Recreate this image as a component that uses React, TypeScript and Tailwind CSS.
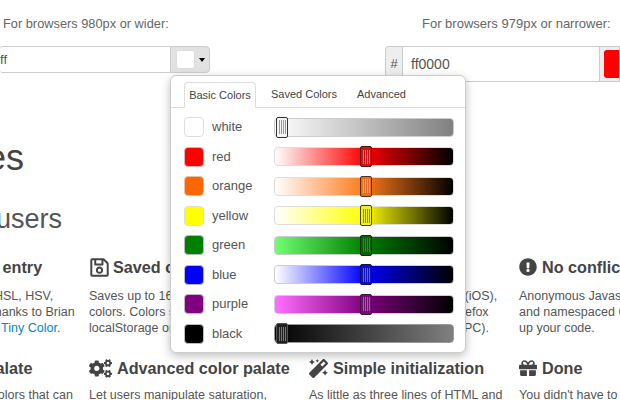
import { FaRegSave, FaCogs, FaMagic, FaExclamationCircle, FaGift } from "react-icons/fa";
import type { ReactNode } from "react";

const colors = [
  { name: "white", swatch: "bg-white border-[#ddd]", track: "bg-[linear-gradient(to_right,#ffffff,#808080)] border-[#ccc]", thumb: "ml-[1px] bg-[#f4f4f4] border-[#333]", line: "bg-[#999]" },
  { name: "red", swatch: "bg-[#ff0000] border-[#e4b0b0]", track: "bg-[linear-gradient(to_right,#ffffff,#ff0000_50%,#000000)] border-[#ddd]", thumb: "ml-[85px] bg-[#cc1515] border-[#501010]", line: "bg-[#f07070]" },
  { name: "orange", swatch: "bg-[#ff6600] border-[#e8c0a0]", track: "bg-[linear-gradient(to_right,#ffffff,#ff7a1a_50%,#000000)] border-[#ddd]", thumb: "ml-[85px] bg-[#e87020] border-[#503015]", line: "bg-[#f5a870]" },
  { name: "yellow", swatch: "bg-[#ffff00] border-[#ddd]", track: "bg-[linear-gradient(to_right,#ffffff,#ffff00_50%,#000000)] border-[#ddd]", thumb: "ml-[85px] bg-[#eeee20] border-[#404010]", line: "bg-[#888820]" },
  { name: "green", swatch: "bg-[#008000] border-[#bbb]", track: "bg-[linear-gradient(to_right,#70ff70,#008000_50%,#000000)] border-[#ccc]", thumb: "ml-[85px] bg-[#0a600a] border-[#0a300a]", line: "bg-[#308830]" },
  { name: "blue", swatch: "bg-[#0000ff] border-[#bbb]", track: "bg-[linear-gradient(to_right,#ffffff,#0000ff_50%,#000000)] border-[#ccc]", thumb: "ml-[85px] bg-[#1010c0] border-[#101060]", line: "bg-[#6060e0]" },
  { name: "purple", swatch: "bg-[#800080] border-[#bbb]", track: "bg-[linear-gradient(to_right,#ff70ff,#800080_50%,#000000)] border-[#ccc]", thumb: "ml-[85px] bg-[#701070] border-[#401040]", line: "bg-[#a060a0]" },
  { name: "black", swatch: "bg-black border-[#bbb]", track: "bg-[linear-gradient(to_right,#000000,#808080)] border-[#999]", thumb: "ml-[1px] bg-[#202020] border-[#555]", line: "bg-[#777]" },
];

function Feature({ icon, title, titleClass = "", bodyClass = "mt-[9px]", lines }: { icon?: ReactNode; title: string; titleClass?: string; bodyClass?: string; lines: ReactNode[] }) {
  return (
    <div className="whitespace-nowrap">
      <h4 className={`flex items-center gap-[5px] h-[24px] text-[16.2px] font-bold text-[#444] ${titleClass}`}>
        {icon}
        <span>{title}</span>
      </h4>
      <div className={`text-[12.5px] leading-[16px] text-[#555] ${bodyClass}`}>
        {lines.map((l, i) => (
          <div key={i}>{l}</div>
        ))}
      </div>
    </div>
  );
}

function Thumb({ cls, line }: { cls: string; line: string }) {
  return (
    <div className={`flex h-[21px] w-[12px] -mt-[2px] items-center justify-center gap-[1px] rounded-[2px] border ${cls}`}>
      <span className={`h-[14px] w-[1px] ${line}`} />
      <span className={`h-[14px] w-[1px] ${line}`} />
      <span className={`h-[14px] w-[1px] ${line}`} />
      <span className={`h-[14px] w-[1px] ${line}`} />
    </div>
  );
}

export default function App() {
  return (
    <div className="relative h-[400px] w-[620px] overflow-hidden bg-white font-['Liberation_Sans',Arial,sans-serif] text-[#555]">
      <div className="flex items-start pt-[14px]">
        <div className="w-[385px]">
          <div className="pl-[3px] text-[12.8px] leading-[20px] text-[#666]">For browsers 980px or wider:</div>
          <div className="mt-[12px] flex h-[27px] w-[210px]">
            <div className="flex-1 overflow-hidden rounded-l-[3px] border-y border-[#ccc] text-[13px] leading-[25px] text-[#555]">ff</div>
            <div className="flex w-[40px] items-center gap-[4px] rounded-r-[4px] border border-[#ccc] bg-[#e2e2e2] pl-[5px]">
              <div className="h-[19px] w-[19px] rounded-[3px] border border-[#ddd] bg-white" />
              <div className="h-0 w-0 border-x-[3px] border-t-[4px] border-x-transparent border-t-black" />
            </div>
          </div>
        </div>
        <div className="w-[235px]">
          <div className="pl-[37px] text-[13px] leading-[20px] text-[#666]">For browsers 979px or narrower:</div>
          <div className="mt-[12px] flex h-[36px]">
            <div className="flex w-[18px] items-center justify-center rounded-l-[3px] border border-[#ccc] bg-[#eee] text-[13px]">#</div>
            <div className="w-[196px] border-y border-[#ccc] pl-[8px] text-[14px] leading-[34px]">ff0000</div>
            <div className="flex-1 border border-[#ccc] bg-[#eee] py-[3px] pl-[4px]">
              <div className="h-full w-full rounded-l-[3px] bg-[#ff0000]" />
            </div>
          </div>
        </div>
      </div>

      <h2 className="mt-[51px] -ml-[118px] whitespace-nowrap text-[36px] leading-[50px] text-[#444]">Features</h2>
      <h3 className="mt-[12px] -ml-[52px] whitespace-nowrap text-[27px] leading-[48px] text-[#555]">For users</h3>

      <div className="mt-[12px] -ml-[131px] grid w-[880px] grid-cols-[220px_220px_210px_210px] gap-y-[20px]">
        <Feature
          titleClass="pl-[97px]"
          title="Text entry"
          lines={[
            <div className="pl-[59px]">Uses RGB, HSL, HSV,</div>,
            <div className="pl-[66px]">and more thanks to Brian</div>,
            <div className="pl-[66px]">Grinstead's <a className="text-[#0088cc]">Tiny Color</a>.</div>,
          ]}
        />
        <Feature icon={<FaRegSave className="-mr-[2px] text-[21px]" />} title="Saved colors" lines={["Saves up to 16 of your", "colors. Colors saved in", "localStorage or cookies."]} />
        <Feature title="Works everywhere" lines={["Chrome, Safari, Opera Mini (iOS),", "Internet Explorer 7+, and Firefox", "Opera and Safari (Mac/Win/PC)."]} />
        <Feature icon={<FaExclamationCircle className="text-[18px]" />} title="No conflicts" lines={["Anonymous Javascript", "and namespaced CSS keep", "up your code."]} />
        <Feature
          titleClass="pl-[69px]"
          title="Basic palate"
          bodyClass="mt-[7px]"
          lines={[<div className="pl-[83px]">Preset colors that can</div>]}
        />
        <Feature icon={<FaCogs className="text-[23px]" />} title="Advanced color palate" bodyClass="mt-[7px]" lines={["Let users manipulate saturation,"]} />
        <Feature icon={<FaMagic className="text-[19px]" />} title="Simple initialization" bodyClass="mt-[7px]" lines={["As little as three lines of HTML and"]} />
        <Feature icon={<FaGift className="text-[18px]" />} title="Done" bodyClass="mt-[7px]" lines={["You didn't have to"]} />
      </div>

      <div className="absolute left-[170px] top-[75px] h-[278px] w-[296px] rounded-[6px] border border-[#ccc] bg-white shadow-[0_3px_10px_rgba(0,0,0,0.25)]">
        <div className="flex h-[32px] items-end border-b border-[#ddd] pl-[13px] text-[11px] text-[#444]">
          <div className="-mb-[1px] flex h-[26px] w-[72px] items-center justify-center rounded-t-[4px] border border-b-white border-[#ddd] bg-white">Basic Colors</div>
          <div className="ml-[6px] flex h-[25px] w-[84px] items-center justify-center">Saved Colors</div>
          <div className="flex h-[25px] w-[71px] items-center justify-center">Advanced</div>
        </div>
        <div className="flex flex-col gap-[9.5px] pl-[13px] pt-[9px]">
          {colors.map((c) => (
            <div key={c.name} className="flex h-[20px] items-center">
              <div className={`h-[20px] w-[20px] rounded-[4px] border ${c.swatch}`} />
              <div className="ml-[8px] w-[62px] text-[13px] text-[#555]">{c.name}</div>
              <div className={`h-[19px] w-[180px] rounded-[4px] border ${c.track}`}>
                <Thumb cls={c.thumb} line={c.line} />
              </div>
            </div>
          ))}
        </div>
      </div>
    </div>
  );
}
